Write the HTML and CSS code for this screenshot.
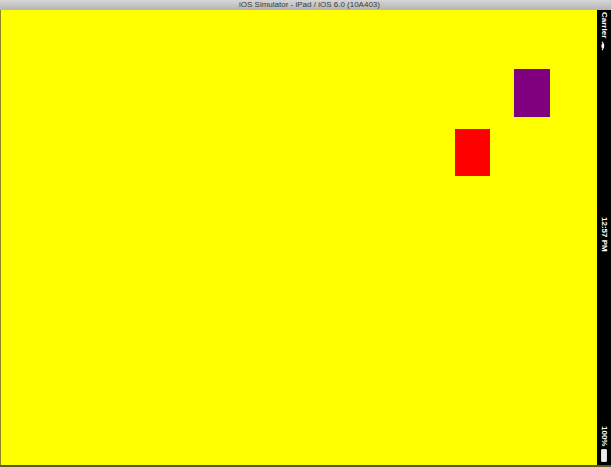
FILE: index.html
```html
<!DOCTYPE html>
<html>
<head>
<meta charset="utf-8">
<link rel="stylesheet" href="styles.css">
</head>
<body>
<div class="window">
  <div class="titlebar">iOS Simulator - iPad / iOS 6.0 (10A403)</div>
  <div class="screen">
    <div class="canvas">
      <div class="box purple"></div>
      <div class="box red"></div>
    </div>
    <div class="statusbar">
      <div class="group">
        <span class="label">Carrier</span>
        <svg class="wifi" width="8" height="10" viewBox="0 0 8 10">
          <path d="M2 0.8 A6 6 0 0 1 2 9.2" fill="none" stroke="#fff" stroke-width="1.1"/>
          <path d="M2 2.8 A3.5 3.5 0 0 1 2 7.2" fill="none" stroke="#fff" stroke-width="1.1"/>
          <circle cx="2.2" cy="5" r="1" fill="#fff"/>
        </svg>
      </div>
      <span class="label time">12:57 PM</span>
      <div class="group">
        <span class="label">100%</span>
        <div class="battery"></div>
      </div>
    </div>
  </div>
</div>
</body>
</html>
```
FILE: styles.css
```css
html, body {
  margin: 0;
  padding: 0;
  background: #2a2a2a;
}
.window {
  width: 611px;
  height: 467px;
  display: flex;
  flex-direction: column;
  overflow: hidden;
}
.titlebar {
  height: 10px;
  background: linear-gradient(#d6d6d6, #b4b4b4);
  color: #3a3a3a;
  font-family: "Liberation Sans", Arial, sans-serif;
  font-size: 8px;
  line-height: 9px;
  text-align: center;
  white-space: nowrap;
  overflow: hidden;
  padding-left: 8px;
}
.screen {
  flex: 1;
  display: flex;
  border-bottom: 2px solid #5a5a30;
}
.canvas {
  flex: 1;
  background: #ffff00;
  position: relative;
  border-left: 1px solid #8a8a20;
}
.box {
  position: absolute;
}
.purple {
  left: 513px;
  top: 59px;
  width: 36px;
  height: 48px;
  background: #800080;
}
.red {
  left: 454px;
  top: 119px;
  width: 35px;
  height: 47px;
  background: #ff0000;
}
.statusbar {
  width: 14px;
  background: #000;
  display: flex;
  flex-direction: column;
  justify-content: space-between;
  align-items: center;
  padding: 2px 0 3px;
  box-sizing: border-box;
}
.group {
  display: flex;
  flex-direction: column;
  align-items: center;
  gap: 3px;
}
.label {
  writing-mode: vertical-rl;
  color: #fff;
  font-family: "Liberation Sans", Arial, sans-serif;
  font-size: 8px;
  font-weight: bold;
  line-height: 10px;
  white-space: nowrap;
}
.time {
  margin-bottom: 8px;
}
.wifi {
  display: block;
}
.battery {
  width: 6px;
  height: 13px;
  border: 1px solid #ddd;
  background: #eee;
  box-sizing: border-box;
  border-radius: 1px;
}
```
